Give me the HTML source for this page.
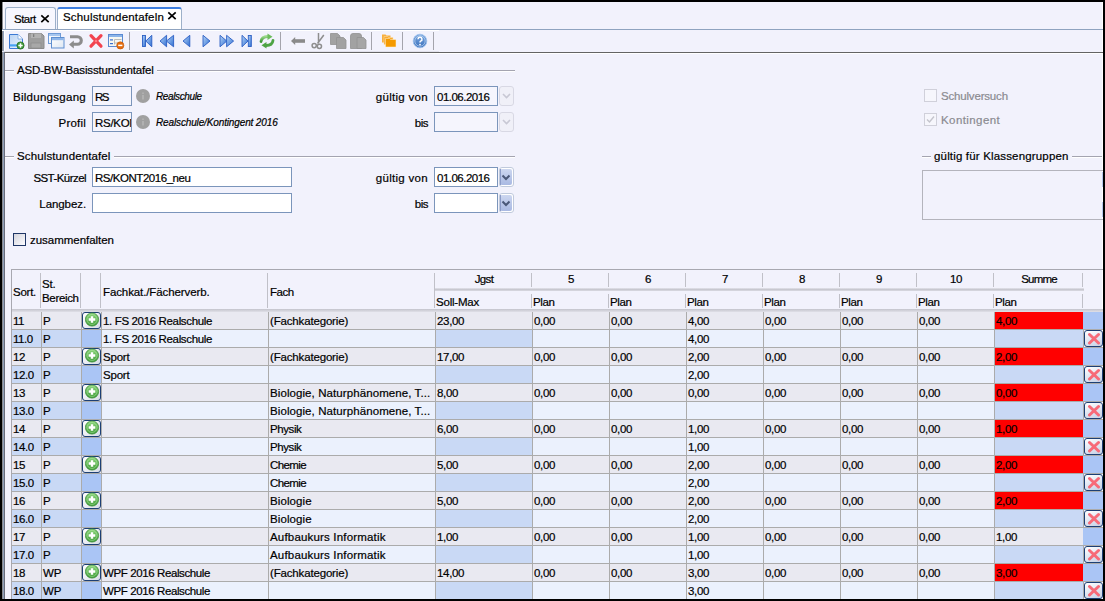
<!DOCTYPE html>
<html><head><meta charset="utf-8"><style>
*{margin:0;padding:0;box-sizing:border-box}
html,body{width:1105px;height:601px;overflow:hidden;background:#000}
body{position:relative;font-family:"Liberation Sans",sans-serif;font-size:11.5px;color:#000}
.a{position:absolute}
.t{position:absolute;white-space:nowrap;line-height:14px;-webkit-text-stroke:0.2px currentColor}
svg{position:absolute;display:block}
</style></head>
<body>
<div class="a" style="left:2px;top:2px;width:1101px;height:597px;background:#f2f2fc"></div>
<div class="a" style="left:2px;top:2px;width:1px;height:597px;background:#8a8a8e"></div>
<div class="a" style="left:3px;top:2px;width:1px;height:27px;background:#fafaff"></div>
<div class="a" style="left:3px;top:29px;width:1px;height:570px;background:#8fa0bb"></div>
<div class="a" style="left:4px;top:30px;width:1px;height:22px;background:#ffffff"></div>
<div class="a" style="left:1102px;top:2px;width:1px;height:597px;background:#ffffff"></div>
<div class="a" style="left:5px;top:7px;width:51px;height:23px;background:#f7f7fe;border:1px solid #9db0c9;border-bottom:none;border-radius:3px 3px 0 0"></div>
<div class="t" style="left:14px;top:12px;letter-spacing:-0.5px;">Start</div>
<div class="a" style="left:57px;top:7px;width:125px;height:23px;background:#ffffff;border:1px solid #9db0c9;border-top:2px solid #3d7de0;border-bottom:none;border-radius:3px 3px 0 0"></div>
<div class="t" style="left:63px;top:10px;letter-spacing:0.176px;">Schulstundentafeln</div>
<svg style="left:40px;top:14px" width="10" height="9" viewBox="0 0 10 9"><path d="M1.3 1.3L8.7 8.2M8.7 1.3L1.3 8.2" stroke="#000" stroke-width="1.7"/></svg>
<svg style="left:167px;top:11px" width="10" height="9" viewBox="0 0 10 9"><path d="M1.3 1.3L8.7 8.2M8.7 1.3L1.3 8.2" stroke="#000" stroke-width="1.7"/></svg>
<div class="a" style="left:2px;top:29px;width:1101px;height:1px;background:#8fa3bf"></div>
<div class="a" style="left:129px;top:32px;width:1px;height:18px;background:#a4a4ac"></div>
<div class="a" style="left:280px;top:32px;width:1px;height:18px;background:#a4a4ac"></div>
<div class="a" style="left:371px;top:32px;width:1px;height:18px;background:#a4a4ac"></div>
<div class="a" style="left:402px;top:32px;width:1px;height:18px;background:#a4a4ac"></div>
<div class="a" style="left:433px;top:32px;width:1px;height:18px;background:#a4a4ac"></div>
<svg style="left:0;top:0" width="440" height="56" viewBox="0 0 440 56"><defs><linearGradient id="nd" x1="0" y1="0" x2="1" y2="1"><stop offset="0" stop-color="#b9d3f3"/><stop offset="1" stop-color="#eef5fd"/></linearGradient><linearGradient id="nav" x1="0" y1="0" x2="1" y2="1"><stop offset="0" stop-color="#b8d6f8"/><stop offset="1" stop-color="#2f6fd2"/></linearGradient><linearGradient id="navr" x1="1" y1="0" x2="0" y2="1"><stop offset="0" stop-color="#b8d6f8"/><stop offset="1" stop-color="#2f6fd2"/></linearGradient><linearGradient id="grn" x1="0" y1="0" x2="0" y2="1"><stop offset="0" stop-color="#9ad88a"/><stop offset="1" stop-color="#3f9a36"/></linearGradient><linearGradient id="hlp" x1="0" y1="0" x2="0" y2="1"><stop offset="0" stop-color="#7aa8e0"/><stop offset="1" stop-color="#3a70bc"/></linearGradient><linearGradient id="win" x1="0" y1="0" x2="1" y2="1"><stop offset="0" stop-color="#ffffff"/><stop offset="1" stop-color="#dde6f2"/></linearGradient></defs><path d="M9.5 34.5h8.5l4.5 4.5v9.5h-13z" fill="url(#nd)" stroke="#3c7ad4" stroke-linejoin="round"/><path d="M18 34.5v4.5h4.5" fill="#fff" stroke="#7aa6e0" stroke-width="0.8"/><rect x="10" y="44.3" width="9" height="2.2" fill="#48a2f2"/><circle cx="20.5" cy="45.5" r="3.6" fill="#3e9a36" stroke="#2a6e26" stroke-width="0.8"/><path d="M20.5 43.3v4.4M18.3 45.5h4.4" stroke="#fff" stroke-width="1.5"/><path d="M28.5 33.5h13l2.5 2.5v12.5h-15.5z" fill="#9e9e9e" stroke="#8a8a8a" rx="1"/><rect x="31" y="33.5" width="10" height="4.5" fill="#b2b2b2"/><rect x="33" y="34.2" width="1.3" height="2.8" fill="#7e7e7e"/><rect x="31" y="43" width="10" height="5" fill="#a8a8a8" stroke="#8c8c8c" stroke-width="0.7"/><rect x="48.5" y="33.5" width="12" height="10" fill="url(#win)" stroke="#6e9ad6"/><rect x="49" y="34" width="11" height="2" fill="#a6c6ef"/><rect x="51.5" y="37.5" width="12.5" height="10.5" fill="url(#win)" stroke="#5e8ed0"/><rect x="52" y="38" width="11.5" height="2.2" fill="#8eb6ea"/><path d="M70 36.7h7.5a3.8 3.8 0 0 1 0 7.6h-4.5" fill="none" stroke="#8c8c8c" stroke-width="3.1"/><path d="M69 44.4l4.8-3.8v7.8z" fill="#8c8c8c"/><path d="M91 35.7l10 10.5M101 35.7l-10 10.5" stroke="#f2434f" stroke-width="3.2" stroke-linecap="round"/><circle cx="96" cy="41" r="1.3" fill="#ff7a82"/><rect x="108.5" y="34.5" width="14" height="12" fill="#f6f7f2" stroke="#5a8ad2"/><rect x="109" y="35" width="13" height="2" fill="#8cb4e8"/><rect x="110" y="39.3" width="3" height="1.2" fill="#3a70d0"/><rect x="110" y="43" width="3" height="1.2" fill="#3a70d0"/><path d="M114.5 39.5h7M114.5 43h6M114.5 39.5v5" stroke="#b4b4b4" stroke-width="0.9" fill="none"/><circle cx="120.3" cy="45.4" r="3.6" fill="#e46c10" stroke="#c45a08" stroke-width="0.6"/><path d="M118.2 45.4h4.2" stroke="#fff" stroke-width="1.5"/><rect x="142.5" y="35.5" width="3" height="11" fill="url(#nav)" stroke="#2a5ec4" stroke-width="0.9"/><path d="M145.8 41.05L151.8 35.3V46.8z" fill="url(#nav)" stroke="#2a5ec4" stroke-width="0.9" stroke-linejoin="round"/><path d="M160 41.05L166.6 35.3V46.8z" fill="url(#nav)" stroke="#2a5ec4" stroke-width="0.9" stroke-linejoin="round"/><path d="M166.4 41.05L173.6 35.3V46.8z" fill="url(#nav)" stroke="#2a5ec4" stroke-width="0.9" stroke-linejoin="round"/><path d="M183 41.05L189.8 35.3V46.8z" fill="url(#nav)" stroke="#2a5ec4" stroke-width="0.9" stroke-linejoin="round"/><path d="M210 41.05L203 35.3V46.8z" fill="url(#nav)" stroke="#2a5ec4" stroke-width="0.9" stroke-linejoin="round"/><path d="M226.8 41.05L220 35.3V46.8z" fill="url(#nav)" stroke="#2a5ec4" stroke-width="0.9" stroke-linejoin="round"/><path d="M233.6 41.05L226.6 35.3V46.8z" fill="url(#nav)" stroke="#2a5ec4" stroke-width="0.9" stroke-linejoin="round"/><path d="M248 41.05L242 35.3V46.8z" fill="url(#nav)" stroke="#2a5ec4" stroke-width="0.9" stroke-linejoin="round"/><rect x="248.3" y="35.5" width="3" height="11" fill="url(#nav)" stroke="#2a5ec4" stroke-width="0.9"/><path d="M261 41.5c0.5-3.5 3.5-5.2 7.5-5" fill="none" stroke="url(#grn)" stroke-width="2.8" stroke-linecap="round"/><path d="M267.5 33.5l5 3.2-5 3.4z" fill="#6cbc5c"/><path d="M273 40.5c-0.5 3.5-3.5 5.2-7.5 5" fill="none" stroke="#4ea444" stroke-width="2.8" stroke-linecap="round"/><path d="M266.5 48.5l-5-3.2 5-3.4z" fill="#4ea444"/><path d="M291 41l4.2-4v8z" fill="#8a8a8a"/><rect x="294" y="39.2" width="11" height="3.6" fill="#8a8a8a"/><path d="M323.8 35L317.5 43.5M318.5 33v10.5" stroke="#8e8e8e" stroke-width="1.5" fill="none"/><circle cx="314.2" cy="45.6" r="2.1" fill="none" stroke="#8e8e8e" stroke-width="1.5"/><circle cx="319.4" cy="46.3" r="2.1" fill="none" stroke="#8e8e8e" stroke-width="1.5"/><path d="M330.5 33.5h7l2.5 2.5v8.5h-9.5z" fill="#a2a2a2" stroke="#929292" stroke-width="0.8"/><path d="M336.5 37.5h7l2.5 2.5v8.5h-9.5z" fill="#a2a2a2" stroke="#929292" stroke-width="0.8"/><path d="M350.5 36a2.5 2.5 0 0 1 2.5-2.5h6a2.5 2.5 0 0 1 2.5 2.5v12.5h-11z" fill="#a2a2a2" stroke="#929292" stroke-width="0.8"/><path d="M357 37.5h6.5l2.5 2.5v8.5h-9z" fill="#a6a6a6" stroke="#929292" stroke-width="0.8"/><path d="M382 34.5h3.5l1 1h4v7h-8.5z" fill="#f7b040"/><path d="M384 36.5h3.5l1 1h4.5v7h-9z" fill="#f7aa30" stroke="#ffe0a8" stroke-width="0.5"/><path d="M385.5 38.5h4l1 1h5.5v7.5h-10.5z" fill="#f59a00" stroke="#fff2d8" stroke-width="0.5"/><circle cx="420" cy="41" r="6.8" fill="url(#hlp)" stroke="#9cc0ec" stroke-width="0.8"/><circle cx="420" cy="41" r="5.2" fill="none" stroke="#d4e4f8" stroke-width="0.6"/><path d="M418 39.2a2 2 0 1 1 2.6 1.9c-0.6 0.3-0.6 0.7-0.6 1.5" fill="none" stroke="#fff" stroke-width="1.5"/><circle cx="420" cy="44.6" r="0.9" fill="#fff"/></svg>
<div class="a" style="left:2px;top:30px;width:437px;height:1px;background:#ffffff"></div>
<div class="a" style="left:2px;top:51px;width:437px;height:1px;background:#e2e2ec"></div>
<div class="a" style="left:4px;top:52px;width:1099px;height:1px;background:#646464"></div>
<div class="a" style="left:4px;top:52px;width:1px;height:547px;background:#6a6d7a"></div>
<div class="a" style="left:5px;top:53px;width:1097px;height:1px;background:#ffffff"></div>
<div class="a" style="left:5px;top:70px;width:9px;height:1px;background:#a4a4b0"></div>
<div class="a" style="left:5px;top:71px;width:9px;height:1px;background:#ffffff"></div>
<div class="t" style="left:17px;top:63px;letter-spacing:-0.152px;">ASD-BW-Basisstundentafel</div>
<div class="a" style="left:157px;top:70px;width:358px;height:1px;background:#a4a4b0"></div>
<div class="a" style="left:157px;top:71px;width:358px;height:1px;background:#ffffff"></div>
<div class="t" style="right:1019px;top:90px;letter-spacing:0.273px;">Bildungsgang</div>
<div class="a" style="left:92px;top:86px;width:40px;height:20px;background:#f5f5fd;border:1px solid #7b95bb"></div>
<div class="t" style="left:95px;top:90px;letter-spacing:-1.5px;">RS</div>
<div class="t" style="right:1019px;top:116px;letter-spacing:0.2px;">Profil</div>
<div class="a" style="left:92px;top:112px;width:40px;height:20px;background:#f5f5fd;border:1px solid #7b95bb;overflow:hidden"></div>
<div class="a" style="left:93px;top:113px;width:38px;height:18px;overflow:hidden"><div class="t" style="left:2px;top:3px;letter-spacing:-0.3px">RS/KONT2016</div></div>
<svg style="left:136px;top:89px" width="14" height="14" viewBox="0 0 14 14"><circle cx="7" cy="7" r="7" fill="#a0a0a0"/><rect x="6.3" y="6" width="1.4" height="4.5" fill="#b8b8b8"/><rect x="6.3" y="3.5" width="1.4" height="1.4" fill="#b8b8b8"/></svg>
<svg style="left:136px;top:115px" width="14" height="14" viewBox="0 0 14 14"><circle cx="7" cy="7" r="7" fill="#a0a0a0"/><rect x="6.3" y="6" width="1.4" height="4.5" fill="#b8b8b8"/><rect x="6.3" y="3.5" width="1.4" height="1.4" fill="#b8b8b8"/></svg>
<div class="t" style="left:156px;top:90px;letter-spacing:-0.378px;font-style:italic;font-size:10px">Realschule</div>
<div class="t" style="left:156px;top:116px;letter-spacing:-0.136px;font-style:italic;font-size:10px">Realschule/Kontingent 2016</div>
<div class="t" style="right:677px;top:90px;letter-spacing:0.3px;">gültig von</div>
<div class="t" style="right:677px;top:116px;letter-spacing:-0.5px;">bis</div>
<div class="a" style="left:434px;top:86px;width:64px;height:20px;background:#f5f5fd;border:1px solid #7b95bb"></div>
<div class="t" style="left:437px;top:90px;letter-spacing:-0.511px;">01.06.2016</div>
<div class="a" style="left:434px;top:112px;width:64px;height:20px;background:#f5f5fd;border:1px solid #7b95bb"></div>
<div class="a" style="left:499px;top:86px;width:15px;height:20px;border:1px solid #d8d8e4;border-radius:3px;background:#f0f0f8"></div>
<svg style="left:502px;top:93px" width="9" height="6" viewBox="0 0 9 6"><path d="M1 1l3.5 3.5L8 1" fill="none" stroke="#c8c8d4" stroke-width="1.6"/></svg>
<div class="a" style="left:499px;top:112px;width:15px;height:20px;border:1px solid #d8d8e4;border-radius:3px;background:#f0f0f8"></div>
<svg style="left:502px;top:119px" width="9" height="6" viewBox="0 0 9 6"><path d="M1 1l3.5 3.5L8 1" fill="none" stroke="#c8c8d4" stroke-width="1.6"/></svg>
<div class="a" style="left:924px;top:89px;width:13px;height:13px;border:1px solid #d0d0da;background:#f6f6fc"></div>
<div class="t" style="left:941px;top:89px;letter-spacing:-0.182px;color:#8a8a90">Schulversuch</div>
<div class="a" style="left:924px;top:113px;width:13px;height:13px;border:1px solid #d0d0da;background:#f6f6fc"></div>
<svg style="left:926px;top:115px" width="9" height="9" viewBox="0 0 9 9"><path d="M1 4.5l2.5 2.5L8 1.5" fill="none" stroke="#c4c4cc" stroke-width="1.4"/></svg>
<div class="t" style="left:941px;top:113px;letter-spacing:0.417px;color:#8a8a90">Kontingent</div>
<div class="a" style="left:5px;top:156px;width:9px;height:1px;background:#a4a4b0"></div>
<div class="a" style="left:5px;top:157px;width:9px;height:1px;background:#ffffff"></div>
<div class="t" style="left:17px;top:149px;letter-spacing:0.125px;">Schulstundentafel</div>
<div class="a" style="left:114px;top:156px;width:401px;height:1px;background:#a4a4b0"></div>
<div class="a" style="left:114px;top:157px;width:401px;height:1px;background:#ffffff"></div>
<div class="t" style="right:1019px;top:171px;letter-spacing:-0.556px;">SST-Kürzel</div>
<div class="a" style="left:92px;top:167px;width:200px;height:20px;background:#fff;border:1px solid #7b95bb"></div>
<div class="t" style="left:95px;top:171px;letter-spacing:-0.457px;">RS/KONT2016_neu</div>
<div class="t" style="right:1019px;top:197px;letter-spacing:-0.086px;">Langbez.</div>
<div class="a" style="left:92px;top:193px;width:200px;height:20px;background:#fff;border:1px solid #7b95bb"></div>
<div class="t" style="right:677px;top:171px;letter-spacing:0.3px;">gültig von</div>
<div class="t" style="right:677px;top:197px;letter-spacing:-0.5px;">bis</div>
<div class="a" style="left:434px;top:167px;width:64px;height:20px;background:#fff;border:1px solid #7b95bb"></div>
<div class="t" style="left:437px;top:171px;letter-spacing:-0.511px;">01.06.2016</div>
<div class="a" style="left:434px;top:193px;width:64px;height:20px;background:#fff;border:1px solid #7b95bb"></div>
<div class="a" style="left:499px;top:167px;width:15px;height:20px;border:1px solid #c0cadc;border-radius:3px;background:#fff"></div>
<div class="a" style="left:500px;top:169px;width:12px;height:16px;border-radius:2px;background:linear-gradient(#cdd7f0,#a9b9e2)"></div>
<div class="a" style="left:500px;top:169px;width:1px;height:16px;background:#8c9cc8"></div>
<svg style="left:501px;top:174px" width="10" height="7" viewBox="0 0 10 7"><path d="M1.5 1.5l3.5 3.5L8.5 1.5" fill="none" stroke="#4a5878" stroke-width="2"/></svg>
<div class="a" style="left:499px;top:193px;width:15px;height:20px;border:1px solid #c0cadc;border-radius:3px;background:#fff"></div>
<div class="a" style="left:500px;top:195px;width:12px;height:16px;border-radius:2px;background:linear-gradient(#cdd7f0,#a9b9e2)"></div>
<div class="a" style="left:500px;top:195px;width:1px;height:16px;background:#8c9cc8"></div>
<svg style="left:501px;top:200px" width="10" height="7" viewBox="0 0 10 7"><path d="M1.5 1.5l3.5 3.5L8.5 1.5" fill="none" stroke="#4a5878" stroke-width="2"/></svg>
<div class="a" style="left:922px;top:156px;width:9px;height:1px;background:#a4a4b0"></div>
<div class="a" style="left:922px;top:157px;width:9px;height:1px;background:#ffffff"></div>
<div class="t" style="left:934px;top:149px;letter-spacing:0.167px;">gültig für Klassengruppen</div>
<div class="a" style="left:1072px;top:156px;width:30px;height:1px;background:#a4a4b0"></div>
<div class="a" style="left:1072px;top:157px;width:30px;height:1px;background:#ffffff"></div>
<div class="a" style="left:922px;top:170px;width:181px;height:50px;border:1px solid #b4b4bc;border-right:none"></div>
<div class="a" style="left:1102px;top:172px;width:1px;height:15px;background:#b4c8ec"></div>
<div class="a" style="left:1102px;top:202px;width:1px;height:15px;background:#b4c8ec"></div>
<div class="a" style="left:13px;top:233px;width:13px;height:13px;border:1px solid #1f3666;background:linear-gradient(135deg,#d4d4dc,#fcfcff)"></div>
<div class="t" style="left:30px;top:233px;letter-spacing:-0.031px;">zusammenfalten</div>
<div class="a" style="left:11px;top:269px;width:1092px;height:1px;background:#a8a8b0"></div>
<div class="a" style="left:11px;top:269px;width:1px;height:330px;background:#a8a8b0"></div>
<div class="a" style="left:40px;top:273px;width:1px;height:35px;background:#c0c0c8"></div>
<div class="a" style="left:80px;top:273px;width:1px;height:35px;background:#c0c0c8"></div>
<div class="a" style="left:100px;top:273px;width:1px;height:35px;background:#c0c0c8"></div>
<div class="a" style="left:267px;top:273px;width:1px;height:35px;background:#c0c0c8"></div>
<div class="a" style="left:434px;top:273px;width:1px;height:35px;background:#c0c0c8"></div>
<div class="a" style="left:531px;top:273px;width:1px;height:14px;background:#c0c0c8"></div>
<div class="a" style="left:608px;top:273px;width:1px;height:14px;background:#c0c0c8"></div>
<div class="a" style="left:685px;top:273px;width:1px;height:14px;background:#c0c0c8"></div>
<div class="a" style="left:762px;top:273px;width:1px;height:14px;background:#c0c0c8"></div>
<div class="a" style="left:839px;top:273px;width:1px;height:14px;background:#c0c0c8"></div>
<div class="a" style="left:916px;top:273px;width:1px;height:14px;background:#c0c0c8"></div>
<div class="a" style="left:993px;top:273px;width:1px;height:14px;background:#c0c0c8"></div>
<div class="a" style="left:1082px;top:273px;width:1px;height:14px;background:#c0c0c8"></div>
<div class="a" style="left:434px;top:294px;width:1px;height:14px;background:#c0c0c8"></div>
<div class="a" style="left:531px;top:294px;width:1px;height:14px;background:#c0c0c8"></div>
<div class="a" style="left:608px;top:294px;width:1px;height:14px;background:#c0c0c8"></div>
<div class="a" style="left:685px;top:294px;width:1px;height:14px;background:#c0c0c8"></div>
<div class="a" style="left:762px;top:294px;width:1px;height:14px;background:#c0c0c8"></div>
<div class="a" style="left:839px;top:294px;width:1px;height:14px;background:#c0c0c8"></div>
<div class="a" style="left:916px;top:294px;width:1px;height:14px;background:#c0c0c8"></div>
<div class="a" style="left:993px;top:294px;width:1px;height:14px;background:#c0c0c8"></div>
<div class="a" style="left:1082px;top:294px;width:1px;height:14px;background:#c0c0c8"></div>
<div class="a" style="left:435px;top:288px;width:649px;height:3px;background:linear-gradient(#e4e4ec,#c8c8d0 50%,#dadae2)"></div>
<div class="a" style="left:12px;top:309px;width:1091px;height:3px;background:linear-gradient(#c4c4cc,#d4d4dc 60%,#e0e0e8)"></div>
<div class="t" style="left:13px;top:285px;letter-spacing:-0.25px;">Sort.</div>
<div class="t" style="left:42px;top:277px;letter-spacing:-0.2px;">St.</div>
<div class="t" style="left:42px;top:291px;letter-spacing:-0.333px;">Bereich</div>
<div class="t" style="left:103px;top:285px;letter-spacing:-0.105px;">Fachkat./Fächerverb.</div>
<div class="t" style="left:270px;top:285px;letter-spacing:-0.433px;">Fach</div>
<div class="t" style="left:436px;width:96px;text-align:center;top:272px;letter-spacing:-0.6px;">Jgst</div>
<div class="t" style="left:533px;width:76px;text-align:center;top:272px;letter-spacing:-0.45px;">5</div>
<div class="t" style="left:610px;width:76px;text-align:center;top:272px;letter-spacing:-0.45px;">6</div>
<div class="t" style="left:687px;width:76px;text-align:center;top:272px;letter-spacing:-0.45px;">7</div>
<div class="t" style="left:764px;width:76px;text-align:center;top:272px;letter-spacing:-0.45px;">8</div>
<div class="t" style="left:841px;width:76px;text-align:center;top:272px;letter-spacing:-0.45px;">9</div>
<div class="t" style="left:918px;width:76px;text-align:center;top:272px;letter-spacing:-0.45px;">10</div>
<div class="t" style="left:995px;width:88px;text-align:center;top:272px;letter-spacing:-0.8px;">Summe</div>
<div class="t" style="left:436px;top:295px;letter-spacing:-0.214px;">Soll-Max</div>
<div class="t" style="left:533px;top:295px;letter-spacing:-0.4px;">Plan</div>
<div class="t" style="left:610px;top:295px;letter-spacing:-0.4px;">Plan</div>
<div class="t" style="left:687px;top:295px;letter-spacing:-0.4px;">Plan</div>
<div class="t" style="left:764px;top:295px;letter-spacing:-0.4px;">Plan</div>
<div class="t" style="left:841px;top:295px;letter-spacing:-0.4px;">Plan</div>
<div class="t" style="left:918px;top:295px;letter-spacing:-0.4px;">Plan</div>
<div class="t" style="left:995px;top:295px;letter-spacing:-0.4px;">Plan</div>
<div class="a" style="left:12px;top:312px;width:1072px;height:17px;background:#e9e9f1"></div>
<div class="a" style="left:994px;top:312px;width:90px;height:17px;background:#ff0000"></div>
<div class="a" style="left:1083px;top:312px;width:20px;height:17px;background:#aac5f5"></div>
<div class="a" style="left:11px;top:329px;width:1092px;height:1px;background:#ababab"></div>
<div class="t" style="left:13px;top:314px;letter-spacing:-0.45px;">11</div>
<div class="t" style="left:43px;top:314px;letter-spacing:-0.2px;">P</div>
<div class="t" style="left:103px;top:314px;letter-spacing:-0.35px;">1. FS 2016 Realschule</div>
<div class="t" style="left:270px;top:314px;letter-spacing:-0.164px;">(Fachkategorie)</div>
<div class="t" style="left:437px;top:314px;letter-spacing:-0.333px;">23,00</div>
<div class="t" style="left:534px;top:314px;letter-spacing:-0.333px;">0,00</div>
<div class="t" style="left:611px;top:314px;letter-spacing:-0.333px;">0,00</div>
<div class="t" style="left:688px;top:314px;letter-spacing:-0.333px;">4,00</div>
<div class="t" style="left:765px;top:314px;letter-spacing:-0.333px;">0,00</div>
<div class="t" style="left:842px;top:314px;letter-spacing:-0.333px;">0,00</div>
<div class="t" style="left:919px;top:314px;letter-spacing:-0.333px;">0,00</div>
<div class="t" style="left:996px;top:314px;letter-spacing:-0.333px;">4,00</div>
<div class="a" style="left:82px;top:312px;width:19px;height:17px;border:1px solid #1c3f74;border-radius:3px;background:linear-gradient(135deg,#ffffff,#d8dce8)"></div>
<svg style="left:85px;top:312px" width="15" height="16" viewBox="0 0 15 16"><defs><linearGradient id="g" x1="0" y1="0" x2="0" y2="1"><stop offset="0" stop-color="#8ed67e"/><stop offset="1" stop-color="#3e9c38"/></linearGradient></defs><circle cx="7" cy="7.5" r="6.6" fill="url(#g)" stroke="#3f8f3a" stroke-width="0.8"/><circle cx="7" cy="7.5" r="5.0" fill="none" stroke="#b8eaa8" stroke-width="0.6" opacity="0.8"/><path d="M7 4.2v6.6M3.7 7.5h6.6" stroke="#fff" stroke-width="2.4"/></svg>
<div class="a" style="left:12px;top:330px;width:1072px;height:17px;background:#ebf1fd"></div>
<div class="a" style="left:12px;top:330px;width:69px;height:17px;background:#c9d9f5"></div>
<div class="a" style="left:82px;top:330px;width:19px;height:17px;background:#aac5f5"></div>
<div class="a" style="left:436px;top:330px;width:96px;height:17px;background:#c9d9f5"></div>
<div class="a" style="left:995px;top:330px;width:88px;height:17px;background:#c9d9f5"></div>
<div class="a" style="left:1083px;top:330px;width:1px;height:17px;background:#ababab"></div>
<div class="a" style="left:11px;top:347px;width:1092px;height:1px;background:#ababab"></div>
<div class="t" style="left:13px;top:332px;letter-spacing:-0.467px;">11.0</div>
<div class="t" style="left:43px;top:332px;letter-spacing:-0.2px;">P</div>
<div class="t" style="left:103px;top:332px;letter-spacing:-0.35px;">1. FS 2016 Realschule</div>
<div class="t" style="left:688px;top:332px;letter-spacing:-0.333px;">4,00</div>
<div class="a" style="left:1084px;top:330px;width:19px;height:17px;border:1px solid #1c3f74;border-radius:3px;background:linear-gradient(160deg,#ffffff,#c4d0e6)"></div>
<svg style="left:1087px;top:332px" width="14" height="13" viewBox="0 0 14 13"><path d="M2.5 2.5l9 8.5M11.5 2.5l-9 8.5" stroke="#f76a78" stroke-width="3" stroke-linecap="round"/></svg>
<div class="a" style="left:12px;top:348px;width:1072px;height:17px;background:#e9e9f1"></div>
<div class="a" style="left:994px;top:348px;width:90px;height:17px;background:#ff0000"></div>
<div class="a" style="left:1083px;top:348px;width:20px;height:17px;background:#aac5f5"></div>
<div class="a" style="left:11px;top:365px;width:1092px;height:1px;background:#ababab"></div>
<div class="t" style="left:13px;top:350px;letter-spacing:-0.45px;">12</div>
<div class="t" style="left:43px;top:350px;letter-spacing:-0.2px;">P</div>
<div class="t" style="left:103px;top:350px;letter-spacing:-0.2px;">Sport</div>
<div class="t" style="left:270px;top:350px;letter-spacing:-0.164px;">(Fachkategorie)</div>
<div class="t" style="left:437px;top:350px;letter-spacing:-0.333px;">17,00</div>
<div class="t" style="left:534px;top:350px;letter-spacing:-0.333px;">0,00</div>
<div class="t" style="left:611px;top:350px;letter-spacing:-0.333px;">0,00</div>
<div class="t" style="left:688px;top:350px;letter-spacing:-0.333px;">2,00</div>
<div class="t" style="left:765px;top:350px;letter-spacing:-0.333px;">0,00</div>
<div class="t" style="left:842px;top:350px;letter-spacing:-0.333px;">0,00</div>
<div class="t" style="left:919px;top:350px;letter-spacing:-0.333px;">0,00</div>
<div class="t" style="left:996px;top:350px;letter-spacing:-0.333px;">2,00</div>
<div class="a" style="left:82px;top:348px;width:19px;height:17px;border:1px solid #1c3f74;border-radius:3px;background:linear-gradient(135deg,#ffffff,#d8dce8)"></div>
<svg style="left:85px;top:348px" width="15" height="16" viewBox="0 0 15 16"><defs><linearGradient id="g" x1="0" y1="0" x2="0" y2="1"><stop offset="0" stop-color="#8ed67e"/><stop offset="1" stop-color="#3e9c38"/></linearGradient></defs><circle cx="7" cy="7.5" r="6.6" fill="url(#g)" stroke="#3f8f3a" stroke-width="0.8"/><circle cx="7" cy="7.5" r="5.0" fill="none" stroke="#b8eaa8" stroke-width="0.6" opacity="0.8"/><path d="M7 4.2v6.6M3.7 7.5h6.6" stroke="#fff" stroke-width="2.4"/></svg>
<div class="a" style="left:12px;top:366px;width:1072px;height:17px;background:#ebf1fd"></div>
<div class="a" style="left:12px;top:366px;width:69px;height:17px;background:#c9d9f5"></div>
<div class="a" style="left:82px;top:366px;width:19px;height:17px;background:#aac5f5"></div>
<div class="a" style="left:436px;top:366px;width:96px;height:17px;background:#c9d9f5"></div>
<div class="a" style="left:995px;top:366px;width:88px;height:17px;background:#c9d9f5"></div>
<div class="a" style="left:1083px;top:366px;width:1px;height:17px;background:#ababab"></div>
<div class="a" style="left:11px;top:383px;width:1092px;height:1px;background:#ababab"></div>
<div class="t" style="left:13px;top:368px;letter-spacing:-0.45px;">12.0</div>
<div class="t" style="left:43px;top:368px;letter-spacing:-0.2px;">P</div>
<div class="t" style="left:103px;top:368px;letter-spacing:-0.2px;">Sport</div>
<div class="t" style="left:688px;top:368px;letter-spacing:-0.333px;">2,00</div>
<div class="a" style="left:1084px;top:366px;width:19px;height:17px;border:1px solid #1c3f74;border-radius:3px;background:linear-gradient(160deg,#ffffff,#c4d0e6)"></div>
<svg style="left:1087px;top:368px" width="14" height="13" viewBox="0 0 14 13"><path d="M2.5 2.5l9 8.5M11.5 2.5l-9 8.5" stroke="#f76a78" stroke-width="3" stroke-linecap="round"/></svg>
<div class="a" style="left:12px;top:384px;width:1072px;height:17px;background:#e9e9f1"></div>
<div class="a" style="left:994px;top:384px;width:90px;height:17px;background:#ff0000"></div>
<div class="a" style="left:1083px;top:384px;width:20px;height:17px;background:#aac5f5"></div>
<div class="a" style="left:11px;top:401px;width:1092px;height:1px;background:#ababab"></div>
<div class="t" style="left:13px;top:386px;letter-spacing:-0.45px;">13</div>
<div class="t" style="left:43px;top:386px;letter-spacing:-0.2px;">P</div>
<div class="t" style="left:270px;top:386px;letter-spacing:0.086px;">Biologie, Naturphänomene, T...</div>
<div class="t" style="left:437px;top:386px;letter-spacing:-0.333px;">8,00</div>
<div class="t" style="left:534px;top:386px;letter-spacing:-0.333px;">0,00</div>
<div class="t" style="left:611px;top:386px;letter-spacing:-0.333px;">0,00</div>
<div class="t" style="left:688px;top:386px;letter-spacing:-0.333px;">0,00</div>
<div class="t" style="left:765px;top:386px;letter-spacing:-0.333px;">0,00</div>
<div class="t" style="left:842px;top:386px;letter-spacing:-0.333px;">0,00</div>
<div class="t" style="left:919px;top:386px;letter-spacing:-0.333px;">0,00</div>
<div class="t" style="left:996px;top:386px;letter-spacing:-0.333px;">0,00</div>
<div class="a" style="left:82px;top:384px;width:19px;height:17px;border:1px solid #1c3f74;border-radius:3px;background:linear-gradient(135deg,#ffffff,#d8dce8)"></div>
<svg style="left:85px;top:384px" width="15" height="16" viewBox="0 0 15 16"><defs><linearGradient id="g" x1="0" y1="0" x2="0" y2="1"><stop offset="0" stop-color="#8ed67e"/><stop offset="1" stop-color="#3e9c38"/></linearGradient></defs><circle cx="7" cy="7.5" r="6.6" fill="url(#g)" stroke="#3f8f3a" stroke-width="0.8"/><circle cx="7" cy="7.5" r="5.0" fill="none" stroke="#b8eaa8" stroke-width="0.6" opacity="0.8"/><path d="M7 4.2v6.6M3.7 7.5h6.6" stroke="#fff" stroke-width="2.4"/></svg>
<div class="a" style="left:12px;top:402px;width:1072px;height:17px;background:#ebf1fd"></div>
<div class="a" style="left:12px;top:402px;width:69px;height:17px;background:#c9d9f5"></div>
<div class="a" style="left:82px;top:402px;width:19px;height:17px;background:#aac5f5"></div>
<div class="a" style="left:436px;top:402px;width:96px;height:17px;background:#c9d9f5"></div>
<div class="a" style="left:995px;top:402px;width:88px;height:17px;background:#c9d9f5"></div>
<div class="a" style="left:1083px;top:402px;width:1px;height:17px;background:#ababab"></div>
<div class="a" style="left:11px;top:419px;width:1092px;height:1px;background:#ababab"></div>
<div class="t" style="left:13px;top:404px;letter-spacing:-0.45px;">13.0</div>
<div class="t" style="left:43px;top:404px;letter-spacing:-0.2px;">P</div>
<div class="t" style="left:270px;top:404px;letter-spacing:0.086px;">Biologie, Naturphänomene, T...</div>
<div class="a" style="left:1084px;top:402px;width:19px;height:17px;border:1px solid #1c3f74;border-radius:3px;background:linear-gradient(160deg,#ffffff,#c4d0e6)"></div>
<svg style="left:1087px;top:404px" width="14" height="13" viewBox="0 0 14 13"><path d="M2.5 2.5l9 8.5M11.5 2.5l-9 8.5" stroke="#f76a78" stroke-width="3" stroke-linecap="round"/></svg>
<div class="a" style="left:12px;top:420px;width:1072px;height:17px;background:#e9e9f1"></div>
<div class="a" style="left:994px;top:420px;width:90px;height:17px;background:#ff0000"></div>
<div class="a" style="left:1083px;top:420px;width:20px;height:17px;background:#aac5f5"></div>
<div class="a" style="left:11px;top:437px;width:1092px;height:1px;background:#ababab"></div>
<div class="t" style="left:13px;top:422px;letter-spacing:-0.45px;">14</div>
<div class="t" style="left:43px;top:422px;letter-spacing:-0.2px;">P</div>
<div class="t" style="left:270px;top:422px;letter-spacing:-0.4px;">Physik</div>
<div class="t" style="left:437px;top:422px;letter-spacing:-0.333px;">6,00</div>
<div class="t" style="left:534px;top:422px;letter-spacing:-0.333px;">0,00</div>
<div class="t" style="left:611px;top:422px;letter-spacing:-0.333px;">0,00</div>
<div class="t" style="left:688px;top:422px;letter-spacing:-0.333px;">1,00</div>
<div class="t" style="left:765px;top:422px;letter-spacing:-0.333px;">0,00</div>
<div class="t" style="left:842px;top:422px;letter-spacing:-0.333px;">0,00</div>
<div class="t" style="left:919px;top:422px;letter-spacing:-0.333px;">0,00</div>
<div class="t" style="left:996px;top:422px;letter-spacing:-0.333px;">1,00</div>
<div class="a" style="left:82px;top:420px;width:19px;height:17px;border:1px solid #1c3f74;border-radius:3px;background:linear-gradient(135deg,#ffffff,#d8dce8)"></div>
<svg style="left:85px;top:420px" width="15" height="16" viewBox="0 0 15 16"><defs><linearGradient id="g" x1="0" y1="0" x2="0" y2="1"><stop offset="0" stop-color="#8ed67e"/><stop offset="1" stop-color="#3e9c38"/></linearGradient></defs><circle cx="7" cy="7.5" r="6.6" fill="url(#g)" stroke="#3f8f3a" stroke-width="0.8"/><circle cx="7" cy="7.5" r="5.0" fill="none" stroke="#b8eaa8" stroke-width="0.6" opacity="0.8"/><path d="M7 4.2v6.6M3.7 7.5h6.6" stroke="#fff" stroke-width="2.4"/></svg>
<div class="a" style="left:12px;top:438px;width:1072px;height:17px;background:#ebf1fd"></div>
<div class="a" style="left:12px;top:438px;width:69px;height:17px;background:#c9d9f5"></div>
<div class="a" style="left:82px;top:438px;width:19px;height:17px;background:#aac5f5"></div>
<div class="a" style="left:436px;top:438px;width:96px;height:17px;background:#c9d9f5"></div>
<div class="a" style="left:995px;top:438px;width:88px;height:17px;background:#c9d9f5"></div>
<div class="a" style="left:1083px;top:438px;width:1px;height:17px;background:#ababab"></div>
<div class="a" style="left:11px;top:455px;width:1092px;height:1px;background:#ababab"></div>
<div class="t" style="left:13px;top:440px;letter-spacing:-0.45px;">14.0</div>
<div class="t" style="left:43px;top:440px;letter-spacing:-0.2px;">P</div>
<div class="t" style="left:270px;top:440px;letter-spacing:-0.4px;">Physik</div>
<div class="t" style="left:688px;top:440px;letter-spacing:-0.333px;">1,00</div>
<div class="a" style="left:1084px;top:438px;width:19px;height:17px;border:1px solid #1c3f74;border-radius:3px;background:linear-gradient(160deg,#ffffff,#c4d0e6)"></div>
<svg style="left:1087px;top:440px" width="14" height="13" viewBox="0 0 14 13"><path d="M2.5 2.5l9 8.5M11.5 2.5l-9 8.5" stroke="#f76a78" stroke-width="3" stroke-linecap="round"/></svg>
<div class="a" style="left:12px;top:456px;width:1072px;height:17px;background:#e9e9f1"></div>
<div class="a" style="left:994px;top:456px;width:90px;height:17px;background:#ff0000"></div>
<div class="a" style="left:1083px;top:456px;width:20px;height:17px;background:#aac5f5"></div>
<div class="a" style="left:11px;top:473px;width:1092px;height:1px;background:#ababab"></div>
<div class="t" style="left:13px;top:458px;letter-spacing:-0.45px;">15</div>
<div class="t" style="left:43px;top:458px;letter-spacing:-0.2px;">P</div>
<div class="t" style="left:270px;top:458px;letter-spacing:-0.6px;">Chemie</div>
<div class="t" style="left:437px;top:458px;letter-spacing:-0.333px;">5,00</div>
<div class="t" style="left:534px;top:458px;letter-spacing:-0.333px;">0,00</div>
<div class="t" style="left:611px;top:458px;letter-spacing:-0.333px;">0,00</div>
<div class="t" style="left:688px;top:458px;letter-spacing:-0.333px;">2,00</div>
<div class="t" style="left:765px;top:458px;letter-spacing:-0.333px;">0,00</div>
<div class="t" style="left:842px;top:458px;letter-spacing:-0.333px;">0,00</div>
<div class="t" style="left:919px;top:458px;letter-spacing:-0.333px;">0,00</div>
<div class="t" style="left:996px;top:458px;letter-spacing:-0.333px;">2,00</div>
<div class="a" style="left:82px;top:456px;width:19px;height:17px;border:1px solid #1c3f74;border-radius:3px;background:linear-gradient(135deg,#ffffff,#d8dce8)"></div>
<svg style="left:85px;top:456px" width="15" height="16" viewBox="0 0 15 16"><defs><linearGradient id="g" x1="0" y1="0" x2="0" y2="1"><stop offset="0" stop-color="#8ed67e"/><stop offset="1" stop-color="#3e9c38"/></linearGradient></defs><circle cx="7" cy="7.5" r="6.6" fill="url(#g)" stroke="#3f8f3a" stroke-width="0.8"/><circle cx="7" cy="7.5" r="5.0" fill="none" stroke="#b8eaa8" stroke-width="0.6" opacity="0.8"/><path d="M7 4.2v6.6M3.7 7.5h6.6" stroke="#fff" stroke-width="2.4"/></svg>
<div class="a" style="left:12px;top:474px;width:1072px;height:17px;background:#ebf1fd"></div>
<div class="a" style="left:12px;top:474px;width:69px;height:17px;background:#c9d9f5"></div>
<div class="a" style="left:82px;top:474px;width:19px;height:17px;background:#aac5f5"></div>
<div class="a" style="left:436px;top:474px;width:96px;height:17px;background:#c9d9f5"></div>
<div class="a" style="left:995px;top:474px;width:88px;height:17px;background:#c9d9f5"></div>
<div class="a" style="left:1083px;top:474px;width:1px;height:17px;background:#ababab"></div>
<div class="a" style="left:11px;top:491px;width:1092px;height:1px;background:#ababab"></div>
<div class="t" style="left:13px;top:476px;letter-spacing:-0.45px;">15.0</div>
<div class="t" style="left:43px;top:476px;letter-spacing:-0.2px;">P</div>
<div class="t" style="left:270px;top:476px;letter-spacing:-0.6px;">Chemie</div>
<div class="t" style="left:688px;top:476px;letter-spacing:-0.333px;">2,00</div>
<div class="a" style="left:1084px;top:474px;width:19px;height:17px;border:1px solid #1c3f74;border-radius:3px;background:linear-gradient(160deg,#ffffff,#c4d0e6)"></div>
<svg style="left:1087px;top:476px" width="14" height="13" viewBox="0 0 14 13"><path d="M2.5 2.5l9 8.5M11.5 2.5l-9 8.5" stroke="#f76a78" stroke-width="3" stroke-linecap="round"/></svg>
<div class="a" style="left:12px;top:492px;width:1072px;height:17px;background:#e9e9f1"></div>
<div class="a" style="left:994px;top:492px;width:90px;height:17px;background:#ff0000"></div>
<div class="a" style="left:1083px;top:492px;width:20px;height:17px;background:#aac5f5"></div>
<div class="a" style="left:11px;top:509px;width:1092px;height:1px;background:#ababab"></div>
<div class="t" style="left:13px;top:494px;letter-spacing:-0.45px;">16</div>
<div class="t" style="left:43px;top:494px;letter-spacing:-0.2px;">P</div>
<div class="t" style="left:270px;top:494px;letter-spacing:0.1px;">Biologie</div>
<div class="t" style="left:437px;top:494px;letter-spacing:-0.333px;">5,00</div>
<div class="t" style="left:534px;top:494px;letter-spacing:-0.333px;">0,00</div>
<div class="t" style="left:611px;top:494px;letter-spacing:-0.333px;">0,00</div>
<div class="t" style="left:688px;top:494px;letter-spacing:-0.333px;">2,00</div>
<div class="t" style="left:765px;top:494px;letter-spacing:-0.333px;">0,00</div>
<div class="t" style="left:842px;top:494px;letter-spacing:-0.333px;">0,00</div>
<div class="t" style="left:919px;top:494px;letter-spacing:-0.333px;">0,00</div>
<div class="t" style="left:996px;top:494px;letter-spacing:-0.333px;">2,00</div>
<div class="a" style="left:82px;top:492px;width:19px;height:17px;border:1px solid #1c3f74;border-radius:3px;background:linear-gradient(135deg,#ffffff,#d8dce8)"></div>
<svg style="left:85px;top:492px" width="15" height="16" viewBox="0 0 15 16"><defs><linearGradient id="g" x1="0" y1="0" x2="0" y2="1"><stop offset="0" stop-color="#8ed67e"/><stop offset="1" stop-color="#3e9c38"/></linearGradient></defs><circle cx="7" cy="7.5" r="6.6" fill="url(#g)" stroke="#3f8f3a" stroke-width="0.8"/><circle cx="7" cy="7.5" r="5.0" fill="none" stroke="#b8eaa8" stroke-width="0.6" opacity="0.8"/><path d="M7 4.2v6.6M3.7 7.5h6.6" stroke="#fff" stroke-width="2.4"/></svg>
<div class="a" style="left:12px;top:510px;width:1072px;height:17px;background:#ebf1fd"></div>
<div class="a" style="left:12px;top:510px;width:69px;height:17px;background:#c9d9f5"></div>
<div class="a" style="left:82px;top:510px;width:19px;height:17px;background:#aac5f5"></div>
<div class="a" style="left:436px;top:510px;width:96px;height:17px;background:#c9d9f5"></div>
<div class="a" style="left:995px;top:510px;width:88px;height:17px;background:#c9d9f5"></div>
<div class="a" style="left:1083px;top:510px;width:1px;height:17px;background:#ababab"></div>
<div class="a" style="left:11px;top:527px;width:1092px;height:1px;background:#ababab"></div>
<div class="t" style="left:13px;top:512px;letter-spacing:-0.45px;">16.0</div>
<div class="t" style="left:43px;top:512px;letter-spacing:-0.2px;">P</div>
<div class="t" style="left:270px;top:512px;letter-spacing:0.1px;">Biologie</div>
<div class="t" style="left:688px;top:512px;letter-spacing:-0.333px;">2,00</div>
<div class="a" style="left:1084px;top:510px;width:19px;height:17px;border:1px solid #1c3f74;border-radius:3px;background:linear-gradient(160deg,#ffffff,#c4d0e6)"></div>
<svg style="left:1087px;top:512px" width="14" height="13" viewBox="0 0 14 13"><path d="M2.5 2.5l9 8.5M11.5 2.5l-9 8.5" stroke="#f76a78" stroke-width="3" stroke-linecap="round"/></svg>
<div class="a" style="left:12px;top:528px;width:1072px;height:17px;background:#e9e9f1"></div>
<div class="a" style="left:1083px;top:528px;width:20px;height:17px;background:#aac5f5"></div>
<div class="a" style="left:11px;top:545px;width:1092px;height:1px;background:#ababab"></div>
<div class="t" style="left:13px;top:530px;letter-spacing:-0.45px;">17</div>
<div class="t" style="left:43px;top:530px;letter-spacing:-0.2px;">P</div>
<div class="t" style="left:270px;top:530px;letter-spacing:0.18px;">Aufbaukurs Informatik</div>
<div class="t" style="left:437px;top:530px;letter-spacing:-0.333px;">1,00</div>
<div class="t" style="left:534px;top:530px;letter-spacing:-0.333px;">0,00</div>
<div class="t" style="left:611px;top:530px;letter-spacing:-0.333px;">0,00</div>
<div class="t" style="left:688px;top:530px;letter-spacing:-0.333px;">1,00</div>
<div class="t" style="left:765px;top:530px;letter-spacing:-0.333px;">0,00</div>
<div class="t" style="left:842px;top:530px;letter-spacing:-0.333px;">0,00</div>
<div class="t" style="left:919px;top:530px;letter-spacing:-0.333px;">0,00</div>
<div class="t" style="left:996px;top:530px;letter-spacing:-0.333px;">1,00</div>
<div class="a" style="left:82px;top:528px;width:19px;height:17px;border:1px solid #1c3f74;border-radius:3px;background:linear-gradient(135deg,#ffffff,#d8dce8)"></div>
<svg style="left:85px;top:528px" width="15" height="16" viewBox="0 0 15 16"><defs><linearGradient id="g" x1="0" y1="0" x2="0" y2="1"><stop offset="0" stop-color="#8ed67e"/><stop offset="1" stop-color="#3e9c38"/></linearGradient></defs><circle cx="7" cy="7.5" r="6.6" fill="url(#g)" stroke="#3f8f3a" stroke-width="0.8"/><circle cx="7" cy="7.5" r="5.0" fill="none" stroke="#b8eaa8" stroke-width="0.6" opacity="0.8"/><path d="M7 4.2v6.6M3.7 7.5h6.6" stroke="#fff" stroke-width="2.4"/></svg>
<div class="a" style="left:12px;top:546px;width:1072px;height:17px;background:#ebf1fd"></div>
<div class="a" style="left:12px;top:546px;width:69px;height:17px;background:#c9d9f5"></div>
<div class="a" style="left:82px;top:546px;width:19px;height:17px;background:#aac5f5"></div>
<div class="a" style="left:436px;top:546px;width:96px;height:17px;background:#c9d9f5"></div>
<div class="a" style="left:995px;top:546px;width:88px;height:17px;background:#c9d9f5"></div>
<div class="a" style="left:1083px;top:546px;width:1px;height:17px;background:#ababab"></div>
<div class="a" style="left:11px;top:563px;width:1092px;height:1px;background:#ababab"></div>
<div class="t" style="left:13px;top:548px;letter-spacing:-0.45px;">17.0</div>
<div class="t" style="left:43px;top:548px;letter-spacing:-0.2px;">P</div>
<div class="t" style="left:270px;top:548px;letter-spacing:0.18px;">Aufbaukurs Informatik</div>
<div class="t" style="left:688px;top:548px;letter-spacing:-0.333px;">1,00</div>
<div class="a" style="left:1084px;top:546px;width:19px;height:17px;border:1px solid #1c3f74;border-radius:3px;background:linear-gradient(160deg,#ffffff,#c4d0e6)"></div>
<svg style="left:1087px;top:548px" width="14" height="13" viewBox="0 0 14 13"><path d="M2.5 2.5l9 8.5M11.5 2.5l-9 8.5" stroke="#f76a78" stroke-width="3" stroke-linecap="round"/></svg>
<div class="a" style="left:12px;top:564px;width:1072px;height:17px;background:#e9e9f1"></div>
<div class="a" style="left:994px;top:564px;width:90px;height:17px;background:#ff0000"></div>
<div class="a" style="left:1083px;top:564px;width:20px;height:17px;background:#aac5f5"></div>
<div class="a" style="left:11px;top:581px;width:1092px;height:1px;background:#ababab"></div>
<div class="t" style="left:13px;top:566px;letter-spacing:-0.45px;">18</div>
<div class="t" style="left:43px;top:566px;letter-spacing:-0.2px;">WP</div>
<div class="t" style="left:103px;top:566px;letter-spacing:-0.389px;">WPF 2016 Realschule</div>
<div class="t" style="left:270px;top:566px;letter-spacing:-0.164px;">(Fachkategorie)</div>
<div class="t" style="left:437px;top:566px;letter-spacing:-0.333px;">14,00</div>
<div class="t" style="left:534px;top:566px;letter-spacing:-0.333px;">0,00</div>
<div class="t" style="left:611px;top:566px;letter-spacing:-0.333px;">0,00</div>
<div class="t" style="left:688px;top:566px;letter-spacing:-0.333px;">3,00</div>
<div class="t" style="left:765px;top:566px;letter-spacing:-0.333px;">0,00</div>
<div class="t" style="left:842px;top:566px;letter-spacing:-0.333px;">0,00</div>
<div class="t" style="left:919px;top:566px;letter-spacing:-0.333px;">0,00</div>
<div class="t" style="left:996px;top:566px;letter-spacing:-0.333px;">3,00</div>
<div class="a" style="left:82px;top:564px;width:19px;height:17px;border:1px solid #1c3f74;border-radius:3px;background:linear-gradient(135deg,#ffffff,#d8dce8)"></div>
<svg style="left:85px;top:564px" width="15" height="16" viewBox="0 0 15 16"><defs><linearGradient id="g" x1="0" y1="0" x2="0" y2="1"><stop offset="0" stop-color="#8ed67e"/><stop offset="1" stop-color="#3e9c38"/></linearGradient></defs><circle cx="7" cy="7.5" r="6.6" fill="url(#g)" stroke="#3f8f3a" stroke-width="0.8"/><circle cx="7" cy="7.5" r="5.0" fill="none" stroke="#b8eaa8" stroke-width="0.6" opacity="0.8"/><path d="M7 4.2v6.6M3.7 7.5h6.6" stroke="#fff" stroke-width="2.4"/></svg>
<div class="a" style="left:12px;top:582px;width:1072px;height:17px;background:#ebf1fd"></div>
<div class="a" style="left:12px;top:582px;width:69px;height:17px;background:#c9d9f5"></div>
<div class="a" style="left:82px;top:582px;width:19px;height:17px;background:#aac5f5"></div>
<div class="a" style="left:436px;top:582px;width:96px;height:17px;background:#c9d9f5"></div>
<div class="a" style="left:995px;top:582px;width:88px;height:17px;background:#c9d9f5"></div>
<div class="a" style="left:1083px;top:582px;width:1px;height:17px;background:#ababab"></div>
<div class="t" style="left:13px;top:584px;letter-spacing:-0.45px;">18.0</div>
<div class="t" style="left:43px;top:584px;letter-spacing:-0.2px;">WP</div>
<div class="t" style="left:103px;top:584px;letter-spacing:-0.389px;">WPF 2016 Realschule</div>
<div class="t" style="left:688px;top:584px;letter-spacing:-0.333px;">3,00</div>
<div class="a" style="left:1084px;top:582px;width:19px;height:17px;border:1px solid #1c3f74;border-radius:3px;background:linear-gradient(160deg,#ffffff,#c4d0e6)"></div>
<svg style="left:1087px;top:584px" width="14" height="13" viewBox="0 0 14 13"><path d="M2.5 2.5l9 8.5M11.5 2.5l-9 8.5" stroke="#f76a78" stroke-width="3" stroke-linecap="round"/></svg>
<div class="a" style="left:41px;top:312px;width:1px;height:287px;background:#ababab"></div>
<div class="a" style="left:81px;top:312px;width:1px;height:287px;background:#ababab"></div>
<div class="a" style="left:101px;top:312px;width:1px;height:287px;background:#ababab"></div>
<div class="a" style="left:268px;top:312px;width:1px;height:287px;background:#ababab"></div>
<div class="a" style="left:435px;top:312px;width:1px;height:287px;background:#ababab"></div>
<div class="a" style="left:532px;top:312px;width:1px;height:287px;background:#ababab"></div>
<div class="a" style="left:609px;top:312px;width:1px;height:287px;background:#ababab"></div>
<div class="a" style="left:686px;top:312px;width:1px;height:287px;background:#ababab"></div>
<div class="a" style="left:763px;top:312px;width:1px;height:287px;background:#ababab"></div>
<div class="a" style="left:840px;top:312px;width:1px;height:287px;background:#ababab"></div>
<div class="a" style="left:917px;top:312px;width:1px;height:287px;background:#ababab"></div>
<div class="a" style="left:994px;top:312px;width:1px;height:287px;background:#ababab"></div>
</body></html>
